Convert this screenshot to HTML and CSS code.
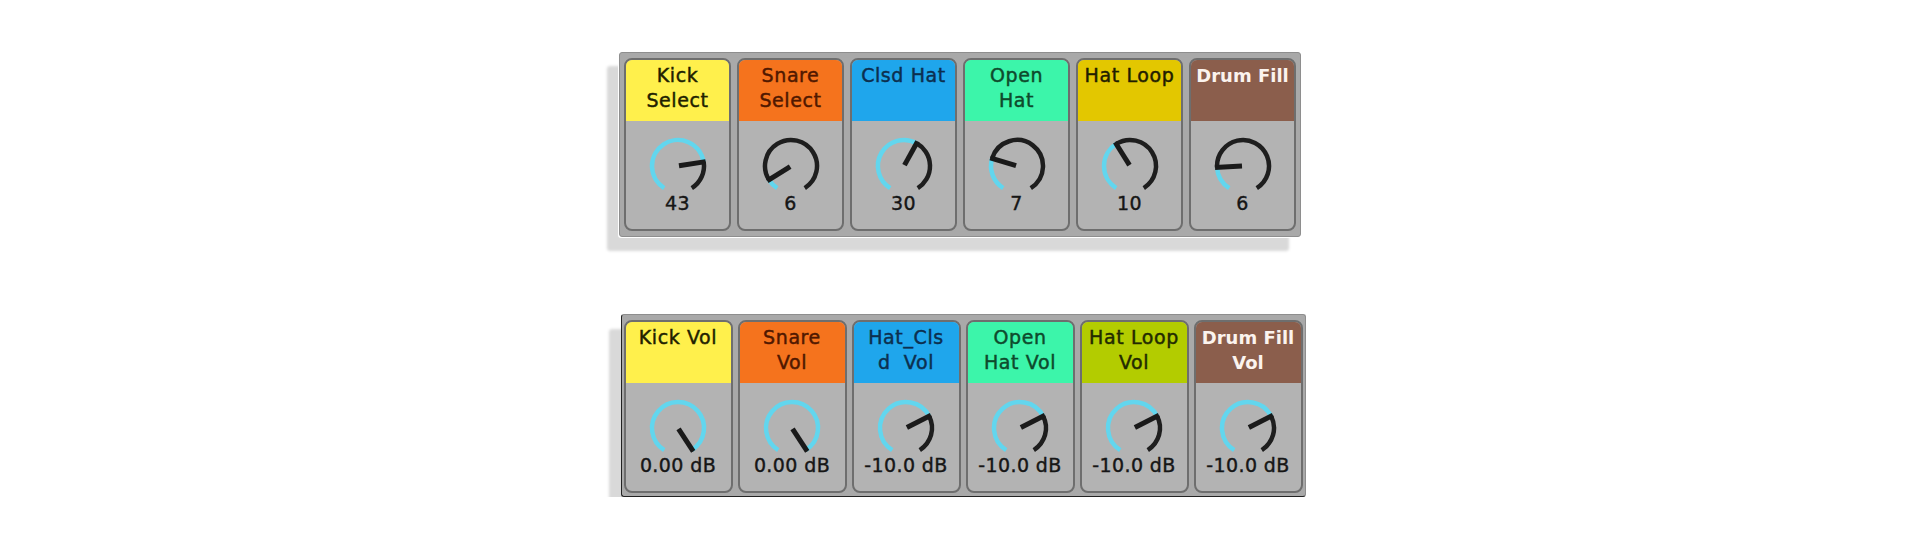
FILE: index.html
```html
<!DOCTYPE html>
<html lang="en">
<head>
    <meta charset="UTF-8">
    <meta name="viewport" content="width=device-width, initial-scale=1.0">
    <title>Drum Rack Macros</title>
    <link rel="stylesheet" href="styles.css">
</head>
<body>
    <div class="rack">
        <div class="panel top-panel">
            <div class="macro">
                <div class="macro-name yellow">Kick<br>Select</div>
                <div class="macro-body">
                    <svg class="knob" data-angle="81" viewBox="0 0 64 64"></svg>
                    <div class="macro-value">43</div>
                </div>
            </div>
            <div class="macro">
                <div class="macro-name orange">Snare<br>Select</div>
                <div class="macro-body">
                    <svg class="knob" data-angle="-122" viewBox="0 0 64 64"></svg>
                    <div class="macro-value">6</div>
                </div>
            </div>
            <div class="macro">
                <div class="macro-name blue">Clsd Hat</div>
                <div class="macro-body">
                    <svg class="knob" data-angle="29" viewBox="0 0 64 64"></svg>
                    <div class="macro-value">30</div>
                </div>
            </div>
            <div class="macro">
                <div class="macro-name mint">Open<br>Hat</div>
                <div class="macro-body">
                    <svg class="knob" data-angle="-73" viewBox="0 0 64 64"></svg>
                    <div class="macro-value">7</div>
                </div>
            </div>
            <div class="macro">
                <div class="macro-name gold">Hat Loop</div>
                <div class="macro-body">
                    <svg class="knob" data-angle="-32" viewBox="0 0 64 64"></svg>
                    <div class="macro-value">10</div>
                </div>
            </div>
            <div class="macro">
                <div class="macro-name brown">Drum Fill</div>
                <div class="macro-body">
                    <svg class="knob" data-angle="-93" viewBox="0 0 64 64"></svg>
                    <div class="macro-value">6</div>
                </div>
            </div>
        </div>

        <div class="panel bottom-panel">
            <div class="macro">
                <div class="macro-name yellow">Kick Vol</div>
                <div class="macro-body">
                    <svg class="knob" data-angle="147" viewBox="0 0 64 64"></svg>
                    <div class="macro-value">0.00 dB</div>
                </div>
            </div>
            <div class="macro">
                <div class="macro-name orange">Snare<br>Vol</div>
                <div class="macro-body">
                    <svg class="knob" data-angle="147" viewBox="0 0 64 64"></svg>
                    <div class="macro-value">0.00 dB</div>
                </div>
            </div>
            <div class="macro">
                <div class="macro-name blue">Hat_Cls<br>d&nbsp; Vol</div>
                <div class="macro-body">
                    <svg class="knob" data-angle="63" viewBox="0 0 64 64"></svg>
                    <div class="macro-value">-10.0 dB</div>
                </div>
            </div>
            <div class="macro">
                <div class="macro-name mint">Open<br>Hat Vol</div>
                <div class="macro-body">
                    <svg class="knob" data-angle="63" viewBox="0 0 64 64"></svg>
                    <div class="macro-value">-10.0 dB</div>
                </div>
            </div>
            <div class="macro">
                <div class="macro-name lime">Hat Loop<br>Vol</div>
                <div class="macro-body">
                    <svg class="knob" data-angle="63" viewBox="0 0 64 64"></svg>
                    <div class="macro-value">-10.0 dB</div>
                </div>
            </div>
            <div class="macro">
                <div class="macro-name brown">Drum Fill<br>Vol</div>
                <div class="macro-body">
                    <svg class="knob" data-angle="63" viewBox="0 0 64 64"></svg>
                    <div class="macro-value">-10.0 dB</div>
                </div>
            </div>
        </div>
    </div>

    <script>
        const MIN_ANGLE = -148;
        const MAX_ANGLE = 148;
        const RADIUS = 26;

        function polar(angle, r) {
            const t = angle * Math.PI / 180;
            return [(32 + r * Math.sin(t)).toFixed(2), (32 - r * Math.cos(t)).toFixed(2)];
        }

        function arcPath(from, to, r) {
            const [x0, y0] = polar(from, r);
            const [x1, y1] = polar(to, r);
            const large = (to - from) > 180 ? 1 : 0;
            return `M${x0} ${y0} A${r} ${r} 0 ${large} 1 ${x1} ${y1}`;
        }

        function drawKnob(svg) {
            const angle = parseFloat(svg.dataset.angle);
            const [nx0, ny0] = polar(angle, 1);
            const [nx1, ny1] = polar(angle, RADIUS + 2);
            let html = '';
            if (angle > MIN_ANGLE) {
                html += `<path class="knob-fill" d="${arcPath(MIN_ANGLE, angle, RADIUS)}"/>`;
            }
            if (angle < MAX_ANGLE) {
                html += `<path class="knob-track" d="${arcPath(angle, MAX_ANGLE, RADIUS)}"/>`;
            }
            html += `<line class="knob-needle" x1="${nx0}" y1="${ny0}" x2="${nx1}" y2="${ny1}"/>`;
            svg.innerHTML = html;
        }

        document.querySelectorAll('.knob').forEach(drawKnob);
    </script>
</body>
</html>
```

FILE: styles.css
```css
body {
    margin: 0;
    background-color: #fff;
    font-family: "DejaVu Sans", sans-serif;
}
.rack {
    display: flex;
    flex-direction: column;
    align-items: center;
    gap: 77px;
    padding-top: 52px;
}
.panel {
    display: flex;
    background-color: #a9a9a9;
    border: 1px solid #8e8e8e;
    border-radius: 3px;
    box-shadow: -1px 1px 0 #fff, -12px 14px 3px #d9d9d9;
}
.top-panel {
    gap: 6px;
    padding: 5px 4px;
}
.bottom-panel {
    gap: 5px;
    padding: 5px 2px 3px 2px;
    margin-left: 6px;
    border-left-color: #222;
    border-bottom-color: #222;
    box-shadow: -12px 15px 3px #d9d9d9;
}
.macro {
    width: 107px;
    height: 173px;
    box-sizing: border-box;
    border: 2px solid #6e6e6e;
    border-radius: 8px;
    overflow: hidden;
    background-color: #b3b3b3;
    display: flex;
    flex-direction: column;
}
.bottom-panel .macro {
    width: 109px;
}
.macro-name {
    height: 61px;
    box-sizing: border-box;
    padding-top: 3px;
    text-align: center;
    font-size: 19px;
    line-height: 25px;
    letter-spacing: 0.6px;
    white-space: nowrap;
    -webkit-text-stroke: 0.45px currentColor;
}
.macro-body {
    flex: 1;
    display: flex;
    flex-direction: column;
    align-items: center;
}
.knob {
    width: 64px;
    height: 64px;
    margin-top: 13px;
}
.knob-fill {
    fill: none;
    stroke: #62d6ee;
    stroke-width: 4.5;
}
.knob-track {
    fill: none;
    stroke: #1e1e1e;
    stroke-width: 4.5;
}
.knob-needle {
    stroke: #1a1a1a;
    stroke-width: 5;
}
.macro-value {
    margin-top: -5px;
    font-size: 19px;
    line-height: 20px;
    letter-spacing: 0.4px;
    color: #161616;
    white-space: nowrap;
    -webkit-text-stroke: 0.4px currentColor;
}
/* Header colours */
.yellow {
    background-color: #fff04c;
    color: #221f00;
}
.orange {
    background-color: #f5731d;
    color: #501800;
}
.blue {
    background-color: #1fa6ec;
    color: #0c2f4f;
}
.mint {
    background-color: #3cf5aa;
    color: #0e4a2c;
}
.gold {
    background-color: #e3c700;
    color: #221d00;
}
.lime {
    background-color: #b3cc00;
    color: #222a00;
}
.brown {
    background-color: #8b5e4c;
    color: #fbf3ee;
    font-weight: bold;
    font-size: 18px;
    letter-spacing: 0;
    -webkit-text-stroke: 0;
}
```
